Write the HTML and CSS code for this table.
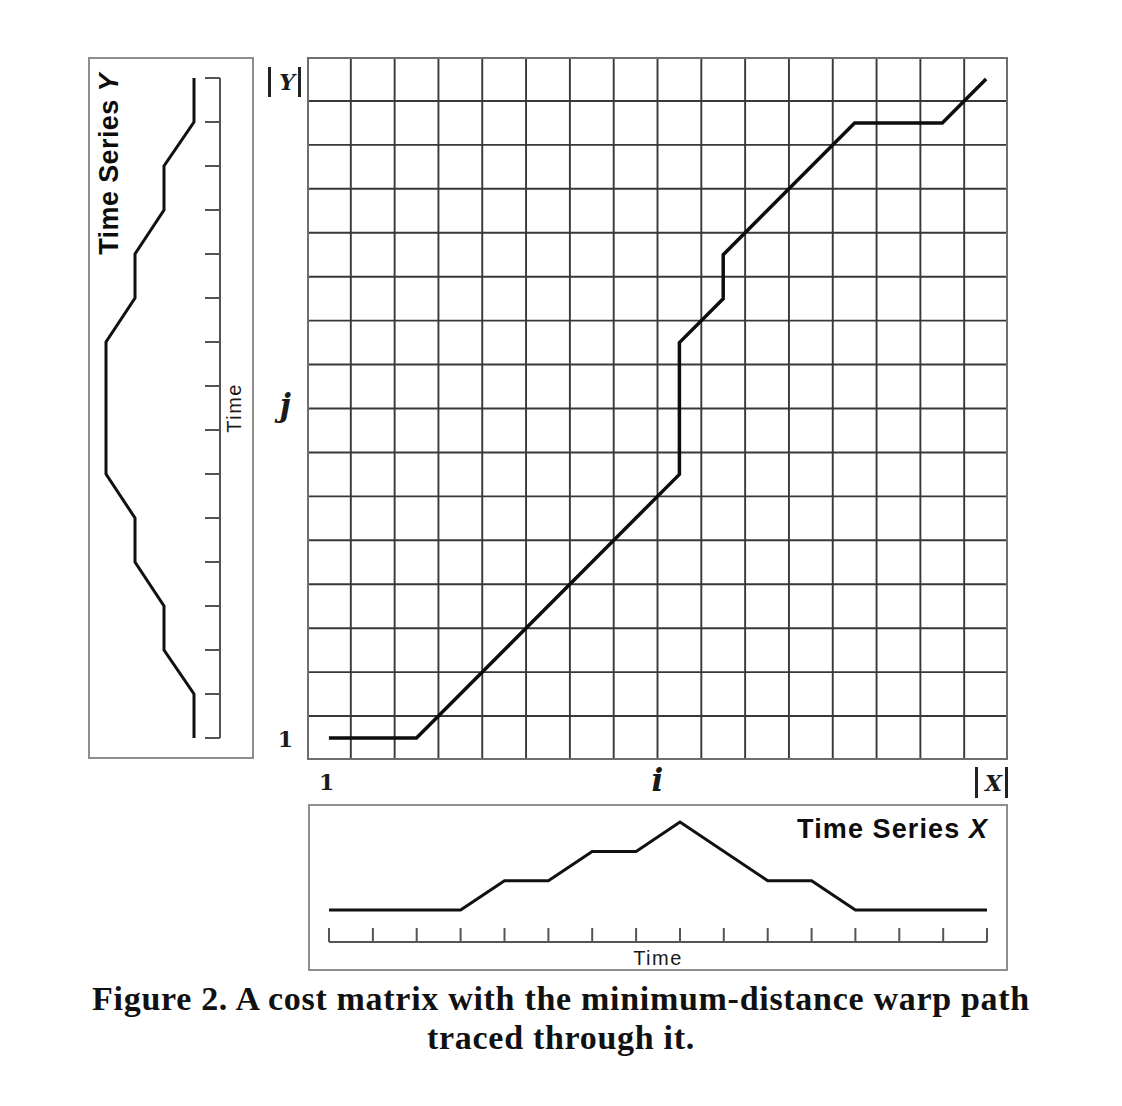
FILE: index.html
```html
<!DOCTYPE html>
<html>
<head>
<meta charset="utf-8">
<title>Cost matrix with warp path</title>
<link rel="stylesheet" href="styles.css">
</head>
<body>
<div class="figure">
  <div class="panel panel-y">
    <svg class="plot" viewBox="0 0 162 698" width="162" height="698">
      <path class="axis" d="M130 19V679 M115 19H130 M115 63H130 M115 107H130 M115 151H130 M115 195H130 M115 239H130 M115 283H130 M115 327H130 M115 371H130 M115 415H130 M115 459H130 M115 503H130 M115 547H130 M115 591H130 M115 635H130 M115 679H130"/>
      <polyline class="curve" points="104,679 104,635 74,591 74,547 45,503 45,459 16,415 16,283 45,239 45,195 74,151 74,107 104,63 104,19"/>
    </svg>
    <div class="ytitle">Time Series <i>Y</i></div>
    <div class="ytime">Time</div>
  </div>

  <div class="labels-y">
    <span class="bars"><i>Y</i></span>
    <span class="var var-j"><i>j</i></span>
    <span class="num num-y">1</span>
  </div>

  <div class="matrix">
    <svg viewBox="0 0 701 703" width="701" height="703">
      <path class="gridline" d="M43.81 0V703 M87.63 0V703 M131.44 0V703 M175.25 0V703 M219.06 0V703 M262.88 0V703 M306.69 0V703 M350.5 0V703 M394.31 0V703 M438.13 0V703 M481.94 0V703 M525.75 0V703 M569.56 0V703 M613.38 0V703 M657.19 0V703 M0 43.94H701 M0 87.88H701 M0 131.81H701 M0 175.75H701 M0 219.69H701 M0 263.63H701 M0 307.56H701 M0 351.5H701 M0 395.44H701 M0 439.38H701 M0 483.31H701 M0 527.25H701 M0 571.19H701 M0 615.13H701 M0 659.06H701"/>
      <rect class="frame" x="1" y="1" width="699" height="701"/>
      <polyline class="warp" points="21.9,681 109.5,681 372.4,417.4 372.4,285.6 416.2,241.7 416.2,197.7 547.6,65.9 635.3,65.9 679.1,22"/>
    </svg>
  </div>

  <div class="labels-x">
    <span class="num num-x">1</span>
    <span class="var var-i"><i>i</i></span>
    <span class="bars bars-x"><i>X</i></span>
  </div>

  <div class="panel panel-x">
    <svg class="plot" viewBox="0 0 696 163" width="696" height="163">
      <path class="axis" d="M19 136H677 M19 122V136 M62.9 122V136 M106.7 122V136 M150.6 122V136 M194.5 122V136 M238.4 122V136 M282.2 122V136 M326.1 122V136 M370 122V136 M413.8 122V136 M457.7 122V136 M501.6 122V136 M545.4 122V136 M589.3 122V136 M633.2 122V136 M677 122V136"/>
      <polyline class="curve" points="19,104 150.6,104 194.5,74.7 238.4,74.7 282.2,45.4 326.1,45.4 370,16.1 457.7,74.7 501.6,74.7 545.4,104 677,104"/>
    </svg>
    <div class="xtitle">Time Series <i>X</i></div>
    <div class="xtime">Time</div>
  </div>
</div>

<p class="caption">Figure 2. A cost matrix with the minimum-distance warp path<br>traced through it.</p>
</body>
</html>
```

FILE: styles.css
```css
body {
  margin: 0;
  background: #ffffff;
  color: #111111;
  font-family: "Liberation Sans", Arial, sans-serif;
}

.figure {
  display: grid;
  grid-template-columns: 166px 53px 701px;
  grid-template-rows: 703px 44px 167px;
  padding: 57px 0 0 88px;
}

.panel {
  box-sizing: border-box;
  border: 2px solid #8e8e8e;
  display: grid;
}

.panel > * {
  grid-area: 1 / 1;
}

.plot {
  display: block;
}

.axis {
  fill: none;
  stroke: #555555;
  stroke-width: 2;
}

.curve {
  fill: none;
  stroke: #111111;
  stroke-width: 3;
  stroke-linejoin: miter;
}

.panel-y {
  grid-row: 1;
  grid-column: 1;
  height: 702px;
}

.ytitle {
  writing-mode: vertical-rl;
  transform: rotate(180deg);
  font-weight: 700;
  font-size: 27px;
  line-height: 28px;
  letter-spacing: 0.4px;
  justify-self: start;
  align-self: start;
  margin: 14px 0 0 5px;
  color: #0d0d0d;
}

.ytitle i,
.xtitle i {
  font-style: italic;
}

.ytime {
  writing-mode: vertical-rl;
  transform: rotate(180deg);
  font-size: 20px;
  line-height: 20px;
  letter-spacing: 1.5px;
  justify-self: start;
  align-self: center;
  margin-left: 134px;
  color: #1a1a1a;
}

.labels-y {
  grid-row: 1;
  grid-column: 2;
  display: grid;
  grid-template-rows: auto 1fr auto;
  justify-items: end;
  padding: 10px 6px 8px 0;
}

.bars {
  display: inline-flex;
  align-items: center;
  box-sizing: border-box;
  height: 30px;
  border-left: 3px solid #222222;
  border-right: 3px solid #222222;
  padding: 0 3px 0 8px;
  font-family: "DejaVu Serif", "Liberation Serif", serif;
  font-weight: 700;
  font-size: 22px;
  line-height: 1;
  color: #1a1a1a;
}

.var {
  font-family: "DejaVu Serif", "Liberation Serif", serif;
  font-weight: 700;
  font-size: 31px;
  line-height: 34px;
  color: #1a1a1a;
}

.var-j {
  align-self: center;
  margin: 0 10px 15px 0;
}

.num {
  font-family: "DejaVu Serif", "Liberation Serif", serif;
  font-weight: 700;
  font-size: 22px;
  line-height: 25px;
  color: #1a1a1a;
}

.num-y {
  margin-right: 8px;
}

.matrix {
  grid-row: 1;
  grid-column: 3;
}

.matrix svg {
  display: block;
}

.gridline {
  fill: none;
  stroke: #383838;
  stroke-width: 1.9;
}

.frame {
  fill: none;
  stroke: #6e6e6e;
  stroke-width: 2;
}

.warp {
  fill: none;
  stroke: #0d0d0d;
  stroke-width: 3.5;
  stroke-linejoin: miter;
}

.labels-x {
  grid-row: 2;
  grid-column: 3;
  display: grid;
  grid-template-columns: 1fr auto 1fr;
  align-items: start;
}

.num-x {
  justify-self: start;
  margin: 10px 0 0 12px;
}

.var-i {
  justify-self: center;
  margin-top: 3px;
}

.bars-x {
  justify-self: end;
  margin-top: 7px;
  height: 31px;
  font-size: 22px;
  padding: 0 3px 0 7px;
}

.panel-x {
  grid-row: 3;
  grid-column: 3;
  width: 700px;
  height: 167px;
  margin-left: 1px;
}

.xtitle {
  justify-self: end;
  align-self: start;
  margin: 8px 18px 0 0;
  font-weight: 700;
  font-size: 27px;
  line-height: 30px;
  letter-spacing: 1.1px;
  color: #0d0d0d;
}

.xtime {
  justify-self: center;
  align-self: end;
  font-size: 20px;
  line-height: 22px;
  letter-spacing: 1.5px;
  color: #1a1a1a;
}

.caption {
  margin: 8px 0 0;
  text-align: center;
  font-family: "Liberation Serif", "Times New Roman", serif;
  font-weight: 700;
  font-size: 34px;
  line-height: 39px;
  letter-spacing: 0.7px;
  color: #111111;
}
```
